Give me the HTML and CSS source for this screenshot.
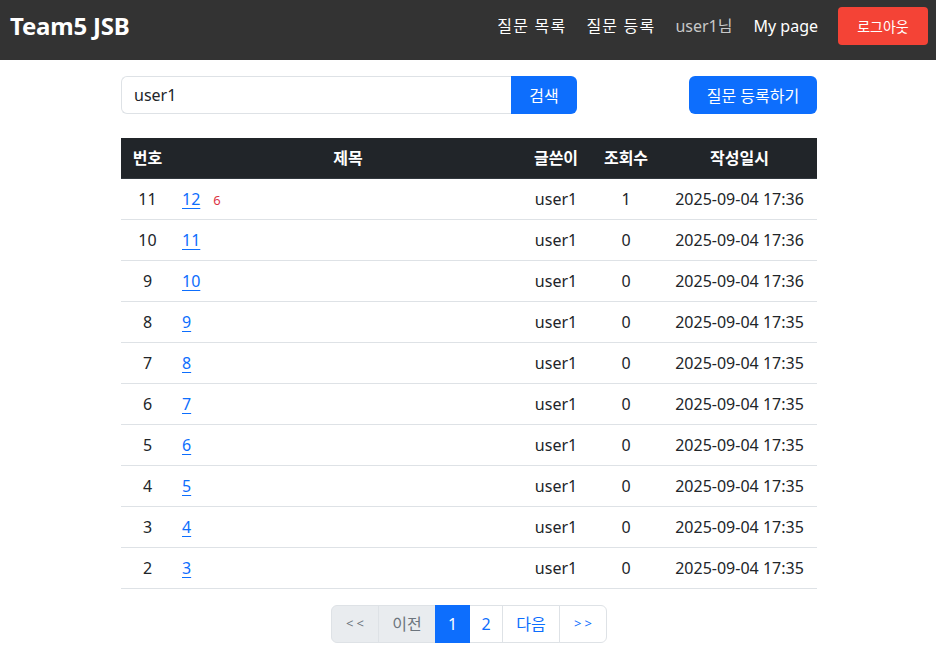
FILE: index.html
```html
<!DOCTYPE html>
<html lang="ko">
<head>
<meta charset="utf-8">
<title>Team5 JSB</title>
<link rel="stylesheet" href="styles.css">
</head>
<body>
<nav class="navbar">
  <a class="brand" href="#">Team5 JSB</a>
  <div class="nav-links">
    <a class="nav-link ko" href="#">질문 목록</a>
    <a class="nav-link ko" href="#">질문 등록</a>
    <span class="nav-user">user1님</span>
    <a class="nav-link mypage" href="#">My page</a>
    <button class="btn-logout">로그아웃</button>
  </div>
</nav>
<main class="container">
  <div class="toolbar">
    <div class="search-group">
      <input class="search-input" type="text" value="user1">
      <button class="btn-search">검색</button>
    </div>
    <button class="btn-register">질문 등록하기</button>
  </div>
  <table class="qtable">
    <thead>
      <tr>
        <th class="c-no">번호</th>
        <th class="c-title">제목</th>
        <th class="c-author">글쓴이</th>
        <th class="c-views">조회수</th>
        <th class="c-date">작성일시</th>
      </tr>
    </thead>
    <tbody>
      <tr><td class="c-no">11</td><td class="c-title-l"><a href="#">12</a><span class="count">6</span></td><td class="c-author">user1</td><td class="c-views">1</td><td class="c-date">2025-09-04 17:36</td></tr>
      <tr><td class="c-no">10</td><td class="c-title-l"><a href="#">11</a></td><td class="c-author">user1</td><td class="c-views">0</td><td class="c-date">2025-09-04 17:36</td></tr>
      <tr><td class="c-no">9</td><td class="c-title-l"><a href="#">10</a></td><td class="c-author">user1</td><td class="c-views">0</td><td class="c-date">2025-09-04 17:36</td></tr>
      <tr><td class="c-no">8</td><td class="c-title-l"><a href="#">9</a></td><td class="c-author">user1</td><td class="c-views">0</td><td class="c-date">2025-09-04 17:35</td></tr>
      <tr><td class="c-no">7</td><td class="c-title-l"><a href="#">8</a></td><td class="c-author">user1</td><td class="c-views">0</td><td class="c-date">2025-09-04 17:35</td></tr>
      <tr><td class="c-no">6</td><td class="c-title-l"><a href="#">7</a></td><td class="c-author">user1</td><td class="c-views">0</td><td class="c-date">2025-09-04 17:35</td></tr>
      <tr><td class="c-no">5</td><td class="c-title-l"><a href="#">6</a></td><td class="c-author">user1</td><td class="c-views">0</td><td class="c-date">2025-09-04 17:35</td></tr>
      <tr><td class="c-no">4</td><td class="c-title-l"><a href="#">5</a></td><td class="c-author">user1</td><td class="c-views">0</td><td class="c-date">2025-09-04 17:35</td></tr>
      <tr><td class="c-no">3</td><td class="c-title-l"><a href="#">4</a></td><td class="c-author">user1</td><td class="c-views">0</td><td class="c-date">2025-09-04 17:35</td></tr>
      <tr><td class="c-no">2</td><td class="c-title-l"><a href="#">3</a></td><td class="c-author">user1</td><td class="c-views">0</td><td class="c-date">2025-09-04 17:35</td></tr>
    </tbody>
  </table>
  <ul class="pagination">
    <li class="page-item disabled small"><span>&lt;&lt;</span></li>
    <li class="page-item disabled wide"><span>이전</span></li>
    <li class="page-item active"><span>1</span></li>
    <li class="page-item"><a href="#">2</a></li>
    <li class="page-item wide"><a href="#">다음</a></li>
    <li class="page-item small"><a href="#">&gt;&gt;</a></li>
  </ul>
</main>
</body>
</html>
```
FILE: styles.css
```css
* { box-sizing: border-box; }
body {
  margin: 0;
  font-family: "Noto Sans", "Noto Sans CJK KR", sans-serif;
  font-size: 16px;
  line-height: 1.5;
  color: #212529;
  background: #fff;
}
.navbar {
  height: 60px;
  background: #333333;
  display: flex;
  align-items: center;
  justify-content: space-between;
  padding: 0 8px 8px 10px;
}
.brand {
  color: #fff;
  text-decoration: none;
  font-weight: 700;
  font-size: 24px;
  letter-spacing: -0.2px;
}
.nav-links {
  display: flex;
  align-items: center;
}
.nav-link {
  color: #fff;
  text-decoration: none;
  font-size: 16px;
  margin-right: 20px;
}
.nav-link.ko { letter-spacing: 1.2px; }
.nav-link.mypage { margin-right: 20px; }
.nav-user {
  color: #c8c8c8;
  font-size: 16px;
  margin-right: 21px;
}
.btn-logout {
  background: #f44336;
  color: #fff;
  border: 0;
  border-radius: 4px;
  height: 38px;
  width: 90px;
  font-family: inherit;
  font-size: 14px;
}
.container {
  width: 696px;
  margin-left: calc(50% - 347px);
  padding-top: 16px;
}
.toolbar {
  display: flex;
  justify-content: space-between;
  align-items: center;
  margin-bottom: 24px;
}
.search-group {
  display: flex;
  width: 456px;
  height: 38px;
}
.search-input {
  flex: 1;
  border: 1px solid #dee2e6;
  border-right: 0;
  border-radius: 6px 0 0 6px;
  padding: 6px 12px;
  font-family: inherit;
  font-size: 16px;
  color: #212529;
  outline: none;
}
.btn-search {
  width: 66px;
  background: #0d6efd;
  color: #fff;
  border: 0;
  border-radius: 0 6px 6px 0;
  font-family: inherit;
  font-size: 16px;
}
.btn-register {
  width: 128px;
  height: 38px;
  background: #0d6efd;
  color: #fff;
  border: 0;
  border-radius: 6px;
  font-family: inherit;
  font-size: 16px;
}
.qtable {
  width: 100%;
  border-collapse: collapse;
}
.qtable th {
  background: #212529;
  color: #fff;
  font-weight: 700;
  height: 40px;
  padding: 0 8px;
  text-align: center;
  border-bottom: 1px solid #32383e;
}
.qtable td {
  height: 41px;
  padding: 0 8px;
  border-bottom: 1px solid #dee2e6;
  text-align: center;
}
.qtable td.c-title-l { text-align: left; }
.c-no { width: 53px; }
.c-author { width: 68px; }
.c-views { width: 72px; }
.c-date { width: 155px; }
.qtable a {
  color: #0d6efd;
  text-decoration: underline;
  text-underline-offset: 3px;
}
.count {
  color: #dc3545;
  font-size: 13px;
  margin-left: 13px;
}
.pagination {
  list-style: none;
  padding: 0;
  margin: 16px 0 0;
  display: flex;
  justify-content: center;
}
.page-item > * {
  display: flex;
  align-items: center;
  justify-content: center;
  height: 38px;
  width: 34px;
  border: 1px solid #dee2e6;
  margin-left: -1px;
  color: #0d6efd;
  text-decoration: none;
  font-size: 16px;
  background: #fff;
}
.page-item:first-child > * { border-radius: 6px 0 0 6px; margin-left: 0; }
.page-item:last-child > * { border-radius: 0 6px 6px 0; }
.page-item.disabled > * { background: #e9ecef; color: #6c757d; }
.page-item.active > * { background: #0d6efd; border-color: #0d6efd; color: #fff; width: 35px; position: relative; z-index: 1; }
.page-item.wide > * { width: 58px; }
.page-item.small > * { font-size: 13px; letter-spacing: 3px; padding-left: 3px; width: 48px; }
```
